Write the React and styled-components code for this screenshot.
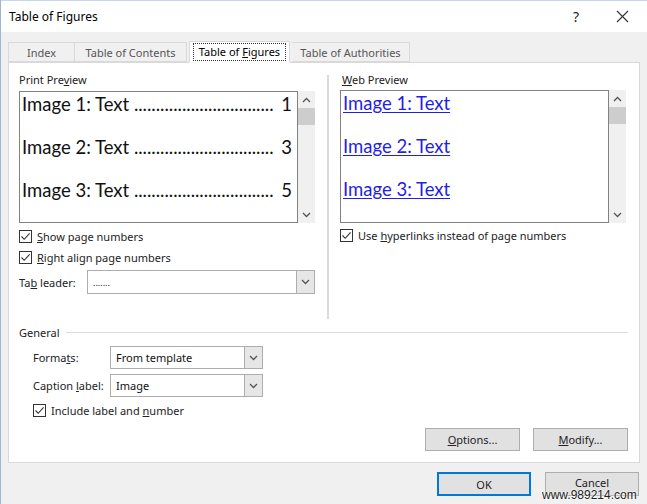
import styled, { createGlobalStyle } from 'styled-components';

const GlobalStyle = createGlobalStyle`
  html, body {
    margin: 0;
    padding: 0;
    background: #f0f0f0;
  }
  body {
    font-family: "Noto Sans", "Open Sans", sans-serif;
    font-size: 11px;
    color: #000;
  }
`;

const Window = styled.div`
  position: relative;
  width: 647px;
  height: 504px;
  display: flex;
  flex-direction: column;
  background: #f0f0f0;
  box-sizing: border-box;
  border-left: 1px solid #9fb6d3;
  overflow: hidden;
`;

const TitleBar = styled.div`
  height: 32px;
  flex-shrink: 0;
  display: flex;
  align-items: center;
  background: #fff;
  border-top: 1px solid #c7d6ea;
  box-sizing: border-box;
  padding-left: 8px;
`;

const Title = styled.div`
  flex: 1;
  font-size: 12px;
  color: #000;
`;

const TitleButton = styled.div`
  width: 24px;
  display: flex;
  justify-content: center;
  align-items: center;
  font-size: 14px;
  color: #222;
  margin: 0 ${(p) => p.$mr || 0}px 0 ${(p) => p.$ml || 0}px;
`;

const Body = styled.div`
  flex: 1;
  display: flex;
  flex-direction: column;
  padding: 8px 7px 0 7px;
`;

const Tabs = styled.div`
  display: flex;
  align-items: flex-end;
  height: 22px;
  position: relative;
  z-index: 1;
`;

const Tab = styled.div`
  height: ${(p) => (p.$active ? 22 : 20)}px;
  width: ${(p) => p.$w}px;
  box-sizing: border-box;
  display: flex;
  align-items: center;
  justify-content: center;
  border: 1px solid #d9d9d9;
  border-bottom: ${(p) => (p.$active ? '1px solid #fff' : '1px solid #d9d9d9')};
  border-left: ${(p) => (p.$first || p.$active ? '1px solid #d9d9d9' : 'none')};
  background: ${(p) => (p.$active ? '#fff' : '#f0f0f0')};
  color: ${(p) => (p.$active ? '#000' : '#555')};
  margin: ${(p) => (p.$active ? '0 2px -1px 2px' : '0')};
  white-space: nowrap;
`;

const Focus = styled.span`
  border: 1px dotted #333;
  padding: 0 5px;
  line-height: 16px;
`;

const Key = styled.span`
  text-decoration: underline;
`;

const Panel = styled.div`
  height: 401px;
  box-sizing: border-box;
  background: #fff;
  border: 1px solid #d9d9d9;
  padding: 9px 11px 0 10px;
  display: flex;
  flex-direction: column;
`;

const TopSection = styled.div`
  display: flex;
  height: 247px;
`;

const Column = styled.div`
  width: ${(p) => p.$w}px;
  display: flex;
  flex-direction: column;
`;

const Divider = styled.div`
  width: 2px;
  margin: 3px 11px 0 12px;
  background: #dadada;
`;

const GroupLabel = styled.div`
  line-height: 16px;
  height: 16px;
  color: #222;
  margin-bottom: ${(p) => p.$mb}px;
  padding-left: ${(p) => p.$pl || 0}px;
`;

const PreviewRow = styled.div`
  display: flex;
  height: ${(p) => p.$h}px;
`;

const PreviewBox = styled.div`
  flex: 1;
  min-width: 0;
  box-sizing: border-box;
  border: 1px solid #828282;
  background: #fff;
  padding: 1px 5px 0 2px;
  display: flex;
  flex-direction: column;
  gap: 21px;
  overflow: hidden;
`;

const PreviewLine = styled.div`
  display: flex;
  justify-content: space-between;
  height: 22px;
  line-height: 22px;
  font-family: Lato, "Noto Sans", sans-serif;
  font-size: 18.5px;
  white-space: nowrap;
  color: ${(p) => (p.$link ? '#1f1fe6' : '#111')};
`;

const LinkText = styled.span`
  text-decoration: underline;
  text-underline-offset: 2px;
`;

const ScrollBar = styled.div`
  width: 17px;
  flex-shrink: 0;
  background: #f0f0f0;
  display: flex;
  flex-direction: column;
  align-items: center;
`;

const ScrollArrow = styled.div`
  height: 17px;
  width: 17px;
  display: flex;
  align-items: center;
  justify-content: center;
`;

const Thumb = styled.div`
  width: 17px;
  height: 17px;
  background: #cdcdcd;
`;

const Track = styled.div`
  flex: 1;
`;

const CheckRow = styled.label`
  display: flex;
  align-items: center;
  height: 16px;
  gap: 5px;
  margin-top: ${(p) => p.$mt}px;
  padding-left: ${(p) => p.$pl || 0}px;
  color: #222;
  white-space: nowrap;
`;

const Box = styled.span`
  width: 13px;
  height: 13px;
  box-sizing: border-box;
  border: 1px solid #333;
  background: #fff;
  display: flex;
  align-items: center;
  justify-content: center;
`;

const FieldRow = styled.div`
  display: flex;
  align-items: center;
  margin-top: ${(p) => p.$mt}px;
  padding-left: ${(p) => p.$pl || 0}px;
`;

const FieldLabel = styled.div`
  width: ${(p) => p.$w}px;
  color: #222;
  white-space: nowrap;
`;

const Select = styled.div`
  width: ${(p) => p.$w}px;
  height: ${(p) => p.$h}px;
  box-sizing: border-box;
  border: 1px solid #adadad;
  background: #fff;
  display: flex;
  align-items: stretch;
`;

const SelectValue = styled.div`
  flex: 1;
  display: flex;
  align-items: center;
  padding-left: 5px;
  color: #111;
  font-size: ${(p) => p.$fs || 11}px;
`;

const SelectButton = styled.div`
  width: 17px;
  background: #e6e6e6;
  border-left: 1px solid #adadad;
  display: flex;
  align-items: center;
  justify-content: center;
`;

const SectionHeader = styled.div`
  display: flex;
  align-items: center;
  margin-top: 5px;
  height: 16px;
  color: #222;
`;

const Rule = styled.div`
  flex: 1;
  height: 1px;
  background: #dcdcdc;
  margin-left: 6px;
`;

const ButtonRow = styled.div`
  display: flex;
  justify-content: flex-end;
  gap: ${(p) => p.$gap}px;
  margin-top: ${(p) => p.$mt}px;
  padding-right: ${(p) => p.$pr || 0}px;
`;

const Button = styled.div`
  width: ${(p) => p.$w}px;
  height: ${(p) => p.$h}px;
  box-sizing: border-box;
  background: #e1e1e1;
  border: ${(p) => (p.$primary ? '2px solid #0078d7' : '1px solid #adadad')};
  display: flex;
  align-items: center;
  justify-content: center;
  color: #222;
  padding-bottom: ${(p) => p.$pb || 0}px;
`;

const Watermark = styled.div`
  position: absolute;
  left: 541px;
  top: 489px;
  font-family: "Liberation Sans", Arial, sans-serif;
  font-size: 12px;
  color: #222;
  line-height: 13px;
  text-shadow: 0 0 2px #fff, 0 0 2px #fff;
`;

const Chevron = ({ up, color = '#555' }) => (
  <svg width="9" height="6" viewBox="0 0 9 6">
    <path
      d={up ? 'M1 5 L4.5 1.5 L8 5' : 'M1 1 L4.5 4.5 L8 1'}
      fill="none"
      stroke={color}
      strokeWidth="1.3"
    />
  </svg>
);

const Check = () => (
  <Box>
    <svg width="11" height="11" viewBox="0 0 11 11">
      <path d="M1.5 5.5 L4.2 8.3 L9.6 2.4" fill="none" stroke="#333" strokeWidth="1.1" />
    </svg>
  </Box>
);

const Scroll = () => (
  <ScrollBar>
    <ScrollArrow>
      <Chevron up />
    </ScrollArrow>
    <Thumb />
    <Track />
    <ScrollArrow>
      <Chevron />
    </ScrollArrow>
  </ScrollBar>
);

const DOTS = '.'.repeat(32);

const printItems = [
  { label: 'Image 1: Text', page: 1 },
  { label: 'Image 2: Text', page: 3 },
  { label: 'Image 3: Text', page: 5 }
];

const App = () => {
  return (
    <>
      <GlobalStyle />
      <Window>
        <TitleBar>
          <Title>Table of Figures</Title>
          <TitleButton>?</TitleButton>
          <TitleButton $ml={22} $mr={13}>
            <svg width="13" height="13" viewBox="0 0 13 13">
              <path d="M1 1 L12 12 M12 1 L1 12" stroke="#333" strokeWidth="1.1" />
            </svg>
          </TitleButton>
        </TitleBar>
        <Body>
          <Tabs>
            <Tab $first $w={67}>Index</Tab>
            <Tab $w={112}>Table of Contents</Tab>
            <Tab $active $w={101}>
              <Focus>
                Table of <Key>F</Key>igures
              </Focus>
            </Tab>
            <Tab $w={118}>Table of Authorities</Tab>
          </Tabs>
          <Panel>
            <TopSection>
              <Column $w={296}>
                <GroupLabel $mb={3}>
                  Print Pre<Key>v</Key>iew
                </GroupLabel>
                <PreviewRow $h={132}>
                  <PreviewBox>
                    {printItems.map((it) => (
                      <PreviewLine key={it.label}>
                        <span>
                          {it.label} {DOTS}
                        </span>
                        <span>{it.page}</span>
                      </PreviewLine>
                    ))}
                  </PreviewBox>
                  <Scroll />
                </PreviewRow>
                <CheckRow $mt={5}>
                  <Check />
                  <span>
                    <Key>S</Key>how page numbers
                  </span>
                </CheckRow>
                <CheckRow $mt={5}>
                  <Check />
                  <span>
                    <Key>R</Key>ight align page numbers
                  </span>
                </CheckRow>
                <FieldRow $mt={5}>
                  <FieldLabel $w={68}>
                    Ta<Key>b</Key> leader:
                  </FieldLabel>
                  <Select $w={228} $h={24}>
                    <SelectValue $fs={9}>.......</SelectValue>
                    <SelectButton>
                      <Chevron />
                    </SelectButton>
                  </Select>
                </FieldRow>
              </Column>
              <Divider />
              <Column $w={286}>
                <GroupLabel $mb={2} $pl={2}>
                  <Key>W</Key>eb Preview
                </GroupLabel>
                <PreviewRow $h={133}>
                  <PreviewBox>
                    {printItems.map((it) => (
                      <PreviewLine key={it.label} $link>
                        <LinkText>{it.label}</LinkText>
                      </PreviewLine>
                    ))}
                  </PreviewBox>
                  <Scroll />
                </PreviewRow>
                <CheckRow $mt={4}>
                  <Check />
                  <span>
                    Use <Key>h</Key>yperlinks instead of page numbers
                  </span>
                </CheckRow>
              </Column>
            </TopSection>
            <SectionHeader>
              General
              <Rule />
            </SectionHeader>
            <FieldRow $mt={6} $pl={14}>
              <FieldLabel $w={77}>
                Forma<Key>t</Key>s:
              </FieldLabel>
              <Select $w={153} $h={23}>
                <SelectValue>From template</SelectValue>
                <SelectButton>
                  <Chevron />
                </SelectButton>
              </Select>
            </FieldRow>
            <FieldRow $mt={5} $pl={14}>
              <FieldLabel $w={77}>
                Caption <Key>l</Key>abel:
              </FieldLabel>
              <Select $w={153} $h={23}>
                <SelectValue>Image</SelectValue>
                <SelectButton>
                  <Chevron />
                </SelectButton>
              </Select>
            </FieldRow>
            <CheckRow $mt={5} $pl={14}>
              <Check />
              <span>
                Include label and <Key>n</Key>umber
              </span>
            </CheckRow>
            <ButtonRow $gap={13} $mt={10}>
              <Button $w={95} $h={23}>
                <span>
                  <Key>O</Key>ptions...
                </span>
              </Button>
              <Button $w={95} $h={23}>
                <span>
                  <Key>M</Key>odify...
                </span>
              </Button>
            </ButtonRow>
          </Panel>
          <ButtonRow $gap={14} $mt={9} $pr={1}>
            <Button $primary $w={94} $h={24}>
              OK
            </Button>
            <Button $w={94} $h={24} $pb={4}>
              Cancel
            </Button>
          </ButtonRow>
        </Body>
        <Watermark>www.989214.com</Watermark>
      </Window>
    </>
  );
};

export default App;
